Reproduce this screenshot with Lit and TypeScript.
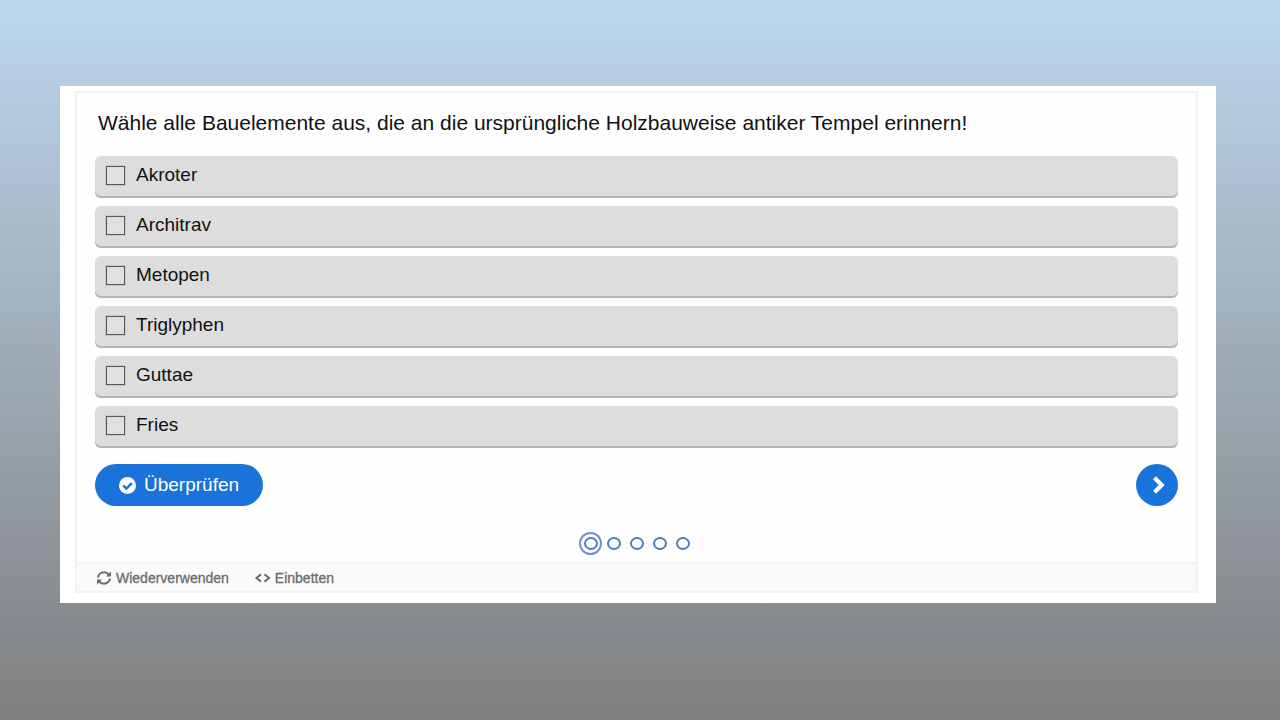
import { LitElement, html, css } from "lit";
import { customElement, state } from "lit/decorators.js";

const OPTIONS = ["Akroter", "Architrav", "Metopen", "Triglyphen", "Guttae", "Fries"];
const SLIDES = [1, 2, 3, 4, 5];

@customElement("quiz-card")
class QuizCard extends LitElement {
  @state() private current = 1;

  static styles = css`
    :host { display: block; }
    * { box-sizing: border-box; }
    .card {
      border: 2px solid #f3f3f3;
      background: #fefefe;
      color: #111;
    }
    .body { padding: 0 18px; }
    fieldset { border: 0; margin: 0; padding: 0; min-width: 0; }
    legend { padding: 16px 3px 19px; font-size: 21px; line-height: 28px; }
    .options { display: flex; flex-direction: column; gap: 8px; }
    .option {
      display: flex;
      align-items: center;
      gap: 11px;
      height: 42px;
      padding: 0 10px 4px 11px;
      border-radius: 6px;
      background: #ddd;
      box-shadow: inset 0 -2px 0 #b5b5b5;
      font-size: 19px;
      line-height: 24px;
    }
    .option input {
      appearance: none;
      width: 19px;
      height: 19px;
      margin: 0;
      border: 1px solid #585858;
      outline: 1px solid #c9c9c9;
      background: #e0e0e0;
    }
    .option input:checked { background: #1a73d9; }
    .actions { display: flex; justify-content: space-between; padding-top: 16px; }
    button { border: 0; font-family: inherit; cursor: pointer; }
    .check {
      display: flex;
      align-items: center;
      justify-content: center;
      gap: 8px;
      height: 42px;
      padding: 0 24px;
      border-radius: 21px;
      background: #1a73d9;
      color: #fff;
      font-size: 19px;
    }
    .next {
      display: flex;
      align-items: center;
      justify-content: center;
      width: 42px;
      height: 42px;
      padding: 0 0 0 4px;
      border-radius: 50%;
      background: #1a73d9;
    }
    svg { display: block; flex: none; }
    .dots { display: flex; justify-content: center; padding: 26px 0 7px; }
    .dot {
      display: flex;
      align-items: center;
      justify-content: center;
      width: 23px;
      height: 23px;
      padding: 0;
      border-radius: 50%;
      background: none;
    }
    .dot::before {
      content: "";
      box-sizing: border-box;
      width: 14px;
      height: 13px;
      border: 2px solid #4a7fc0;
      border-radius: 50%;
    }
    .dot[aria-current="true"] { box-shadow: inset 0 0 0 2px #6f93be; }
    .foot {
      display: flex;
      gap: 25px;
      height: 29px;
      padding: 0 19px;
      border-top: 2px solid #f3f3f3;
      background: #fafafa;
    }
    .tool {
      display: flex;
      align-items: center;
      gap: 4px;
      padding: 0;
      background: none;
      color: #6b6b6b;
      font-size: 14px;
      -webkit-text-stroke: 0.3px #6b6b6b;
    }
  `;

  render() {
    return html`
      <section class="card">
        <div class="body">
          <fieldset>
            <legend>Wähle alle Bauelemente aus, die an die ursprüngliche Holzbauweise antiker Tempel erinnern!</legend>
            <div class="options">
              ${OPTIONS.map((name) => html`<label class="option"><input type="checkbox" />${name}</label>`)}
            </div>
          </fieldset>
          <div class="actions">
            <button class="check">
              <svg width="17" height="17" viewBox="0 0 17 17" aria-hidden="true">
                <circle cx="8.5" cy="8.5" r="8.500" fill="#fff" />
                <path d="M4.2 8.300l3.2 3.200 5.400-5.400" fill="none" stroke="#1a73d9" stroke-width="2.4" />
              </svg>
              Überprüfen
            </button>
            <button class="next" aria-label="Weiter" @click=${() => (this.current = Math.min(5, this.current + 1))}>
              <svg width="14" height="18" viewBox="0 0 14 18" aria-hidden="true">
                <path d="M2.5 1.8L9.700 9l-7.200 7.200" fill="none" stroke="#fff" stroke-width="4.2" />
              </svg>
            </button>
          </div>
          <nav class="dots">
            ${SLIDES.map((n) => html`<button class="dot" aria-label=${`Seite ${n}`}
              aria-current=${n === this.current ? "true" : "false"} @click=${() => (this.current = n)}></button>`)}
          </nav>
        </div>
        <footer class="foot">
          <button class="tool">
            <svg width="16" height="14" viewBox="0 0 16 14" fill="none" stroke="#6b6b6b" stroke-width="2" aria-hidden="true">
              <path d="M2 6.500C2.500 3.500 5 1.300 8 1.300c2 0 3.700.900 4.800 2.400M14 7.500c-.500 3-3 5.200-6 5.200-2 0-3.700-.900-4.800-2.400" />
              <path d="M15 0.500V5.500H10zM1 13.500V8.500H6z" fill="#6b6b6b" stroke="none" />
            </svg>
            Wiederverwenden
          </button>
          <button class="tool">
            <svg width="17" height="10" viewBox="0 0 17 10" fill="none" stroke="#6b6b6b" stroke-width="2" aria-hidden="true">
              <path d="M7 1.300L2.500 5 7 8.700M10.500 1.300L15 5l-4.500 3.700" />
            </svg>
            Einbetten
          </button>
        </footer>
      </section>
    `;
  }
}

@customElement("app-root")
class AppRoot extends LitElement {
  static styles = css`
    :host {
      display: block;
      box-sizing: border-box;
      min-height: 100vh;
      padding: 86px 64px 60px 60px;
      background: linear-gradient(#bdd7ee, #7f7f7f);
      font-family: "Liberation Sans", Arial, sans-serif;
    }
    .panel { padding: 5px 18px 10px 15px; background: #fff; }
  `;

  render() {
    return html`<main class="panel"><quiz-card></quiz-card></main>`;
  }
}
